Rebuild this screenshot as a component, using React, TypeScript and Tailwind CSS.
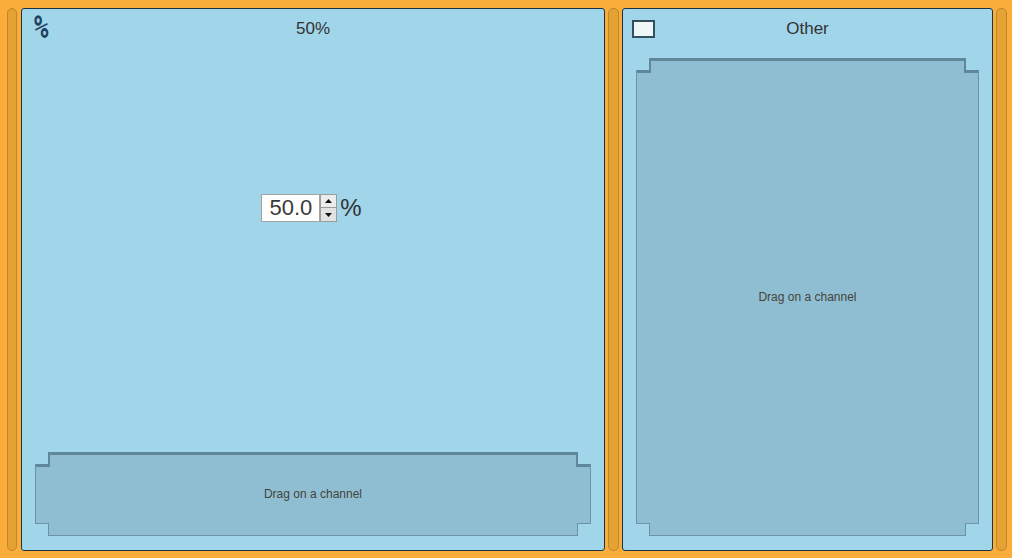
import React from 'react';

const SANS = { fontFamily: '"Liberation Sans", Arial, sans-serif' };

interface DropSlotProps {
  width: number;
  height: number;
  label: string;
}

// Card-slot outline with notched corners; the dark band along the top reads as an inset edge.
const DropSlot: React.FC<DropSlotProps> = ({ width: W, height: H, label }) => {
  const n = 13; // horizontal notch
  const v = 12; // top notch depth
  const b = 13; // bottom notch depth
  const shape = `${n},0 ${W - n},0 ${W - n},${v} ${W},${v} ${W},${H - b} ${W - n},${H - b} ${W - n},${H} ${n},${H} ${n},${H - b} 0,${H - b} 0,${v} ${n},${v}`;
  const edge = '#6d92a6';
  const band = '#60869a';

  return (
    <div className="relative flex items-center justify-center" style={{ width: W, height: H }}>
      <svg className="absolute inset-0" width={W} height={H} shapeRendering="crispEdges">
        <polygon points={shape} fill="#8fbed3" />
        {/* top inset band + step shelves */}
        <rect x={n} y={0} width={W - 2 * n} height={3} fill={band} />
        <rect x={0} y={v} width={n + 2} height={3} fill={band} />
        <rect x={W - n - 2} y={v} width={n + 2} height={3} fill={band} />
        <rect x={n} y={0} width={2} height={v + 3} fill={band} />
        <rect x={W - n - 2} y={0} width={2} height={v + 3} fill={band} />
        {/* sides and bottom notches */}
        <rect x={0} y={v} width={1} height={H - b - v + 1} fill={edge} />
        <rect x={W - 1} y={v} width={1} height={H - b - v + 1} fill={edge} />
        <rect x={0} y={H - b} width={n + 1} height={1} fill={edge} />
        <rect x={W - n - 1} y={H - b} width={n + 1} height={1} fill={edge} />
        <rect x={n} y={H - b} width={1} height={b} fill={edge} />
        <rect x={W - n - 1} y={H - b} width={1} height={b} fill={edge} />
        <rect x={n} y={H - 1} width={W - 2 * n} height={1} fill={edge} />
      </svg>
      <span className="relative text-[12px] text-[#45443a]" style={SANS}>
        {label}
      </span>
    </div>
  );
};

const Splitter: React.FC<{ w: string }> = ({ w }) => (
  <div className={`${w} shrink-0 rounded-[5px] border border-[#c3852a] bg-[#e4a134]`} />
);

const SpinBox: React.FC<{ value: string }> = ({ value }) => (
  <div className="flex items-center">
    <div className="flex h-[28px] w-[59px] items-center justify-end border border-[#a3a3a3] bg-white pr-[7px] text-[22px] leading-none text-[#3a3a3a]" style={SANS}>
      {value}
    </div>
    <div className="flex h-[28px] w-[17px] flex-col">
      <div className="flex h-[14px] items-center justify-center border border-[#9c9c9c] bg-[#ececec]">
        <svg width="7" height="4" viewBox="0 0 7 4">
          <path d="M0 4 L3.5 0 L7 4 Z" fill="#111" />
        </svg>
      </div>
      <div className="flex h-[14px] items-center justify-center border border-t-0 border-[#9c9c9c] bg-[#e2e2e2]">
        <svg width="7" height="4" viewBox="0 0 7 4">
          <path d="M0 0 L7 0 L3.5 4 Z" fill="#111" />
        </svg>
      </div>
    </div>
    <span className="ml-[3px] text-[24px] leading-none text-[#333]" style={SANS}>%</span>
  </div>
);

export default function App() {
  return (
    <div className="flex h-[558px] w-[1012px] bg-[#fbad3b] pl-[7px] pr-[5px] pt-[8px] pb-[7px]">
      <Splitter w="w-[10px]" />

      {/* percentage channel */}
      <div className="ml-[4px] flex w-[584px] shrink-0 flex-col rounded-[3px] border border-[#1b3343] bg-[#a1d5ea]">
        <div className="grid h-[40px] grid-cols-[1fr_auto_1fr] items-center">
          <span className="pl-[12px]">
            <span
              className="inline-block origin-center scale-y-[1.3] text-[24px] font-bold leading-none text-[#1d4460]"
              style={{ fontFamily: '"DejaVu Sans Mono", monospace' }}
            >
              %
            </span>
          </span>
          <span className="text-[17px] text-[#333]" style={SANS}>50%</span>
          <span />
        </div>
        <div className="flex flex-1 items-start justify-center pt-[145px] pr-[3px]">
          <SpinBox value="50.0" />
        </div>
        <div className="px-[13px] pb-[14px]">
          <DropSlot width={556} height={84} label="Drag on a channel" />
        </div>
      </div>

      <div className="ml-[3px]">
        <Splitter w="h-full w-[11px]" />
      </div>

      {/* other channel */}
      <div className="ml-[3px] flex w-[371px] shrink-0 flex-col rounded-[3px] border border-[#1b3343] bg-[#a1d5ea]">
        <div className="grid h-[40px] grid-cols-[1fr_auto_1fr] items-center">
          <div className="ml-[9px] h-[18px] w-[23px] border-2 border-[#34505f] bg-[#eef6fa]" />
          <span className="text-[17px] text-[#333]" style={SANS}>Other</span>
          <span />
        </div>
        <div className="mt-[9px] px-[13px] pb-[14px]">
          <DropSlot width={343} height={478} label="Drag on a channel" />
        </div>
      </div>

      <div className="ml-[3px]">
        <Splitter w="h-full w-[11px]" />
      </div>
    </div>
  );
}
